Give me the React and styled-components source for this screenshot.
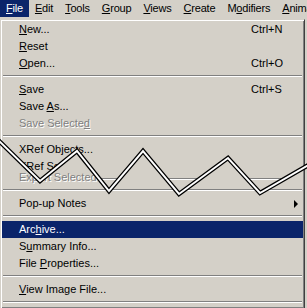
import React from 'react';
import styled, { createGlobalStyle } from 'styled-components';

const GlobalStyle = createGlobalStyle`
  html, body {
    margin: 0;
    padding: 0;
    background: #d4d0c8;
    overflow: hidden;
  }
  body {
    font-family: "Liberation Sans", Arial, sans-serif;
    font-size: 11px;
    color: #000;
  }
`;

const Window = styled.div`
  position: relative;
  width: 307px;
  height: 308px;
  overflow: hidden;
`;

const MenuBar = styled.div`
  display: flex;
  height: 19px;
  white-space: nowrap;
  overflow: hidden;
`;

const BarItem = styled.div`
  flex-shrink: 0;
  padding: 0 6px;
  height: 17px;
  line-height: 17px;
  letter-spacing: -0.2px;
  background: ${p => (p.$active ? '#0a246a' : 'transparent')};
  color: ${p => (p.$active ? '#fff' : '#000')};
`;

const Menu = styled.div`
  width: 305px;
  box-sizing: border-box;
  padding: 1px;
  background: #d4d0c8;
  border: 1px solid;
  border-color: #d4d0c8 #404040 #404040 #d4d0c8;
  box-shadow: inset 1px 1px 0 #fff, inset -1px -1px 0 #808080;
`;

const Row = styled.div`
  display: grid;
  grid-template-columns: 1fr 52px;
  height: 17px;
  line-height: 17px;
  padding-left: 17px;
  white-space: nowrap;
  background: ${p => (p.$active ? '#0a246a' : 'transparent')};
  color: ${p => (p.$active ? '#fff' : '#000')};
`;

const Label = styled.span`
  color: ${p => (p.$disabled ? '#808080' : 'inherit')};
  text-shadow: ${p => (p.$disabled ? '1px 1px 0 #fff' : 'none')};
`;

const Shortcut = styled.span``;

const Arrow = styled.span`
  justify-self: end;
  align-self: center;
  margin-right: 5px;
  width: 0;
  height: 0;
  border-top: 4px solid transparent;
  border-bottom: 4px solid transparent;
  border-left: 4px solid #000;
`;

const Separator = styled.div`
  height: 9px;
  box-sizing: border-box;
  padding: 3px 1px 0;

  &::after {
    content: '';
    display: block;
    border-top: 1px solid #808080;
    border-bottom: 1px solid #fff;
  }
`;

const Tear = styled.div`
  height: ${p => p.$h}px;
`;

const Overlay = styled.div`
  position: absolute;
  top: 19px;
  left: 0;
  clip-path: polygon(0 0, 307px 0, 307px 147px, 260px 174px, 228px 139px, 179px 175px,
    143px 132px, 109px 172px, 77px 132px, 40px 162px, 0 123px);
`;

const Zigzag = styled.svg`
  position: absolute;
  top: 0;
  left: 0;
  pointer-events: none;
`;

const barItems = [
  ['F', 'ile'],
  ['E', 'dit'],
  ['T', 'ools'],
  ['G', 'roup'],
  ['V', 'iews'],
  ['C', 'reate'],
  ['M', 'odifiers', 1],
  ['A', 'nima'],
];

function BarLabel({ item }) {
  const [a, b, at] = item;
  if (at) {
    return <>{a}<u>{b[0]}</u>{b.slice(1)}</>;
  }
  return <><u>{a}</u>{b}</>;
}

// label split as [before, mnemonic, after]
const head = [
  { t: ['', 'N', 'ew...'], key: 'Ctrl+N' },
  { t: ['', 'R', 'eset'] },
  { t: ['', 'O', 'pen...'], key: 'Ctrl+O' },
  { sep: true },
  { t: ['', 'S', 'ave'], key: 'Ctrl+S' },
  { t: ['Save ', 'A', 's...'] },
  { t: ['Save Selecte', 'd', ''], off: true },
  { sep: true },
  { t: ['XRef Ob', 'j', 'ects...'] },
];

const tail = [
  { t: ['Export Selected', '', ''], off: true },
  { sep: true },
  { t: ['Pop-up Notes', '', ''], sub: true },
  { sep: true },
  { t: ['Arc', 'h', 'ive...'], on: true },
  { t: ['S', 'u', 'mmary Info...'] },
  { t: ['File ', 'P', 'roperties...'] },
  { sep: true },
  { t: ['', 'V', 'iew Image File...'] },
  { sep: true },
];

function Item({ item }) {
  if (item.sep) return <Separator />;
  const [pre, mn, post] = item.t;
  return (
    <Row $active={item.on}>
      <Label $disabled={item.off}>
        {pre}
        {mn && <u>{mn}</u>}
        {post}
      </Label>
      {item.sub ? <Arrow /> : <Shortcut>{item.key}</Shortcut>}
    </Row>
  );
}

const zig = '-4,138 40,181 77,151 109,191 143,151 179,194 228,158 260,193 312,163';

export default function App() {
  return (
    <Window>
      <GlobalStyle />
      <MenuBar>
        {barItems.map((it, i) => (
          <BarItem key={i} $active={i === 0}>
            <BarLabel item={it} />
          </BarItem>
        ))}
      </MenuBar>

      <Menu>
        {head.map((it, i) => <Item key={i} item={it} />)}
        <Tear $h={11} />
        {tail.map((it, i) => <Item key={'t' + i} item={it} />)}
      </Menu>

      <Overlay>
        <Menu>
          {head.map((it, i) => <Item key={i} item={it} />)}
          <Item item={{ t: ['XRef S', 'c', 'ene...'] }} />
          <Separator />
          <Tear $h={40} />
        </Menu>
      </Overlay>

      <Zigzag width="307" height="308" viewBox="0 0 307 308">
        <polyline points={zig} fill="none" stroke="#000" strokeWidth="4.5" strokeLinejoin="miter" />
        <polyline points={zig} fill="none" stroke="#fff" strokeWidth="2" strokeLinejoin="miter" />
      </Zigzag>
    </Window>
  );
}
